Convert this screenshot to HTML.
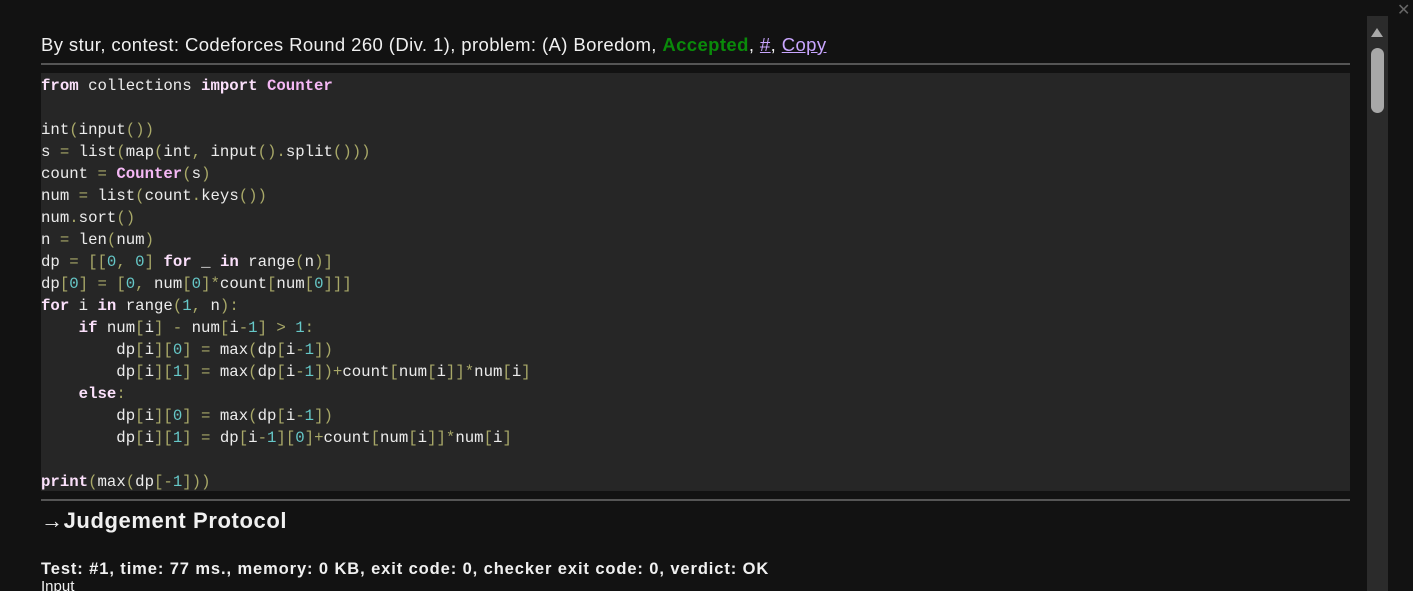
<!DOCTYPE html>
<html><head><meta charset="utf-8"><style>
html,body{margin:0;padding:0;background:#121212;width:1413px;height:591px;overflow:hidden}
body{position:relative;font-family:"Liberation Sans","DejaVu Sans",sans-serif;color:#f0f0f0}
.hdr{position:absolute;left:41px;top:34px;font-size:18.5px;letter-spacing:0.4px;white-space:nowrap}
.hdr .acc{color:#0a8a0a;font-weight:bold}
.hdr a{color:#c9a6ff;text-decoration:underline}
.rule{position:absolute;left:41px;width:1309px;height:2px;background:#555}
.code{position:absolute;left:41px;top:73px;width:1309px;height:418px;background:#262626}
pre{margin:0;position:absolute;left:41px;top:75px;font-family:"Liberation Mono",monospace;font-size:15.7px;line-height:22px;color:#ececec}
.k{font-weight:bold;color:#fbe0fb}
.c{font-weight:bold;color:#f5b8f5}
.p{color:#a8a868}
.n{color:#66c8c8}
h2{position:absolute;left:41px;top:508px;margin:0;font-size:22px;letter-spacing:0.6px;font-weight:bold;white-space:nowrap}
.t{position:absolute;left:41px;top:560px;font-size:16.5px;font-weight:bold;white-space:nowrap;letter-spacing:0.9px}
.in{position:absolute;left:41px;top:578px;font-size:15px}
.sb{position:absolute;left:1367px;top:16px;width:21px;height:575px;background:#2b2b2b}
.th{position:absolute;left:1371px;top:48px;width:13px;height:65px;border-radius:7px;background:#a8a8a8}
.up{position:absolute;left:1371px;top:28px;width:0;height:0;border-left:6.5px solid transparent;border-right:6.5px solid transparent;border-bottom:9px solid #a8a8a8}
.x{position:absolute;left:1397px;top:0px;color:#666;font-size:16px;font-weight:bold}
</style></head><body>
<div class="hdr">By stur, contest: Codeforces Round 260 (Div. 1), problem: (A) Boredom, <span class="acc">Accepted</span>, <a>#</a>, <a>Copy</a></div>
<div class="rule" style="top:63px"></div>
<div class="code"></div>
<pre><span class="k">from</span> collections <span class="k">import</span> <span class="c">Counter</span>

int<span class="p">(</span>input<span class="p">())</span>
s <span class="p">=</span> list<span class="p">(</span>map<span class="p">(</span>int<span class="p">,</span> input<span class="p">().</span>split<span class="p">()))</span>
count <span class="p">=</span> <span class="c">Counter</span><span class="p">(</span>s<span class="p">)</span>
num <span class="p">=</span> list<span class="p">(</span>count<span class="p">.</span>keys<span class="p">())</span>
num<span class="p">.</span>sort<span class="p">()</span>
n <span class="p">=</span> len<span class="p">(</span>num<span class="p">)</span>
dp <span class="p">= [[</span><span class="n">0</span><span class="p">,</span> <span class="n">0</span><span class="p">]</span> <span class="k">for</span> _ <span class="k">in</span> range<span class="p">(</span>n<span class="p">)]</span>
dp<span class="p">[</span><span class="n">0</span><span class="p">] = [</span><span class="n">0</span><span class="p">,</span> num<span class="p">[</span><span class="n">0</span><span class="p">]*</span>count<span class="p">[</span>num<span class="p">[</span><span class="n">0</span><span class="p">]]]</span>
<span class="k">for</span> i <span class="k">in</span> range<span class="p">(</span><span class="n">1</span><span class="p">,</span> n<span class="p">):</span>
    <span class="k">if</span> num<span class="p">[</span>i<span class="p">] -</span> num<span class="p">[</span>i<span class="p">-</span><span class="n">1</span><span class="p">] &gt;</span> <span class="n">1</span><span class="p">:</span>
        dp<span class="p">[</span>i<span class="p">][</span><span class="n">0</span><span class="p">] =</span> max<span class="p">(</span>dp<span class="p">[</span>i<span class="p">-</span><span class="n">1</span><span class="p">])</span>
        dp<span class="p">[</span>i<span class="p">][</span><span class="n">1</span><span class="p">] =</span> max<span class="p">(</span>dp<span class="p">[</span>i<span class="p">-</span><span class="n">1</span><span class="p">])+</span>count<span class="p">[</span>num<span class="p">[</span>i<span class="p">]]*</span>num<span class="p">[</span>i<span class="p">]</span>
    <span class="k">else</span><span class="p">:</span>
        dp<span class="p">[</span>i<span class="p">][</span><span class="n">0</span><span class="p">] =</span> max<span class="p">(</span>dp<span class="p">[</span>i<span class="p">-</span><span class="n">1</span><span class="p">])</span>
        dp<span class="p">[</span>i<span class="p">][</span><span class="n">1</span><span class="p">] =</span> dp<span class="p">[</span>i<span class="p">-</span><span class="n">1</span><span class="p">][</span><span class="n">0</span><span class="p">]+</span>count<span class="p">[</span>num<span class="p">[</span>i<span class="p">]]*</span>num<span class="p">[</span>i<span class="p">]</span>

<span class="k">print</span><span class="p">(</span>max<span class="p">(</span>dp<span class="p">[-</span><span class="n">1</span><span class="p">]))</span></pre>
<div class="rule" style="top:499px"></div>
<h2>→Judgement Protocol</h2>
<div class="t">Test: #1, time: 77 ms., memory: 0 KB, exit code: 0, checker exit code: 0, verdict: OK</div>
<div class="in">Input</div>
<div class="sb"></div><div class="up"></div><div class="th"></div>
<div class="x">✕</div>
</body></html>
